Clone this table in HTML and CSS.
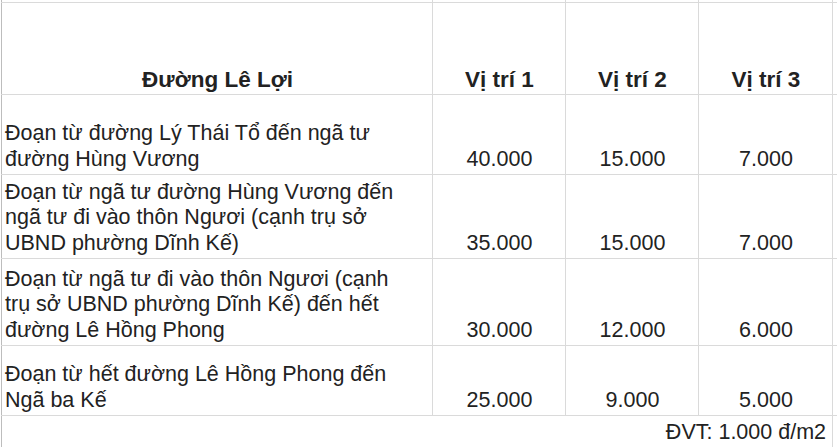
FILE: index.html
```html
<!DOCTYPE html>
<html lang="vi">
<head>
<meta charset="utf-8">
<link rel="stylesheet" href="styles.css">
</head>
<body>
<div class="sheet">
<table class="grid">
  <colgroup>
    <col class="c-name">
    <col class="c-val">
    <col class="c-val">
    <col class="c-val3">
    <col class="c-rest">
  </colgroup>
  <tr class="spacer"><td></td><td></td><td></td><td></td><td></td></tr>
  <tr class="head">
    <th class="name-h">Đường Lê Lợi</th>
    <th>Vị trí 1</th>
    <th>Vị trí 2</th>
    <th>Vị trí 3</th>
    <td class="rest"></td>
  </tr>
  <tr class="r1">
    <td class="name">Đoạn từ đường Lý Thái Tổ đến ngã tư<br>đường Hùng Vương</td>
    <td class="num">40.000</td>
    <td class="num">15.000</td>
    <td class="num">7.000</td>
    <td class="rest"></td>
  </tr>
  <tr class="r2">
    <td class="name">Đoạn từ ngã tư đường Hùng Vương đến<br>ngã tư đi vào thôn Ngươi (cạnh trụ sở<br>UBND phường Dĩnh Kế)</td>
    <td class="num">35.000</td>
    <td class="num">15.000</td>
    <td class="num">7.000</td>
    <td class="rest"></td>
  </tr>
  <tr class="r3">
    <td class="name">Đoạn từ ngã tư đi vào thôn Ngươi (cạnh<br>trụ sở UBND phường Dĩnh Kế) đến hết<br>đường Lê Hồng Phong</td>
    <td class="num">30.000</td>
    <td class="num">12.000</td>
    <td class="num">6.000</td>
    <td class="rest"></td>
  </tr>
  <tr class="r4">
    <td class="name">Đoạn từ hết đường Lê Hồng Phong đến<br>Ngã ba Kế</td>
    <td class="num">25.000</td>
    <td class="num">9.000</td>
    <td class="num">5.000</td>
    <td class="rest"></td>
  </tr>
  <tr class="foot">
    <td class="unit" colspan="4">ĐVT: 1.000 đ/m2</td>
    <td class="rest"></td>
  </tr>
</table>
</div>
</body>
</html>
```

FILE: styles.css
```css
html, body {
  margin: 0;
  padding: 0;
  background: #ffffff;
}

.sheet {
  width: 837px;
  height: 447px;
  overflow: hidden;
  padding-left: 1px;
  box-sizing: border-box;
}

.grid {
  border-collapse: collapse;
  table-layout: fixed;
  width: 836px;
  font-family: "Liberation Sans", Arial, sans-serif;
  font-size: 21.5px;
  line-height: 25.5px;
  color: #222222;
}

.c-name { width: 431px; }
.c-val { width: 133px; }
.c-val3 { width: 134px; }
.c-rest { width: 5px; }

.grid td,
.grid th {
  border: 1px solid #dadada;
  vertical-align: bottom;
  padding: 0 2px 2px 3px;
  overflow: hidden;
}

.grid tr > :first-child {
  border-left: 1px solid #bdbdbd;
}

.grid th {
  font-weight: bold;
  font-size: 22.5px;
  text-align: center;
}

.spacer td {
  height: 2px;
  padding: 0;
  font-size: 0;
  line-height: 0;
  border-top: none;
}

.head { height: 92px; }
.r1 { height: 80px; }
.r2 { height: 84px; }
.r3 { height: 87px; }
.r4 { height: 70px; }

.name {
  text-align: left;
  white-space: nowrap;
}

.num {
  text-align: center;
}

.foot td {
  height: 40px;
  vertical-align: top;
  border-bottom: none;
}

.foot .unit {
  text-align: right;
  padding: 4px 6px 0 0;
  border-left: 1px solid #bdbdbd;
}

.foot .unit,
.foot .rest {
  border-right: 1px solid #dadada;
}

.rest {
  padding: 0;
}
```
